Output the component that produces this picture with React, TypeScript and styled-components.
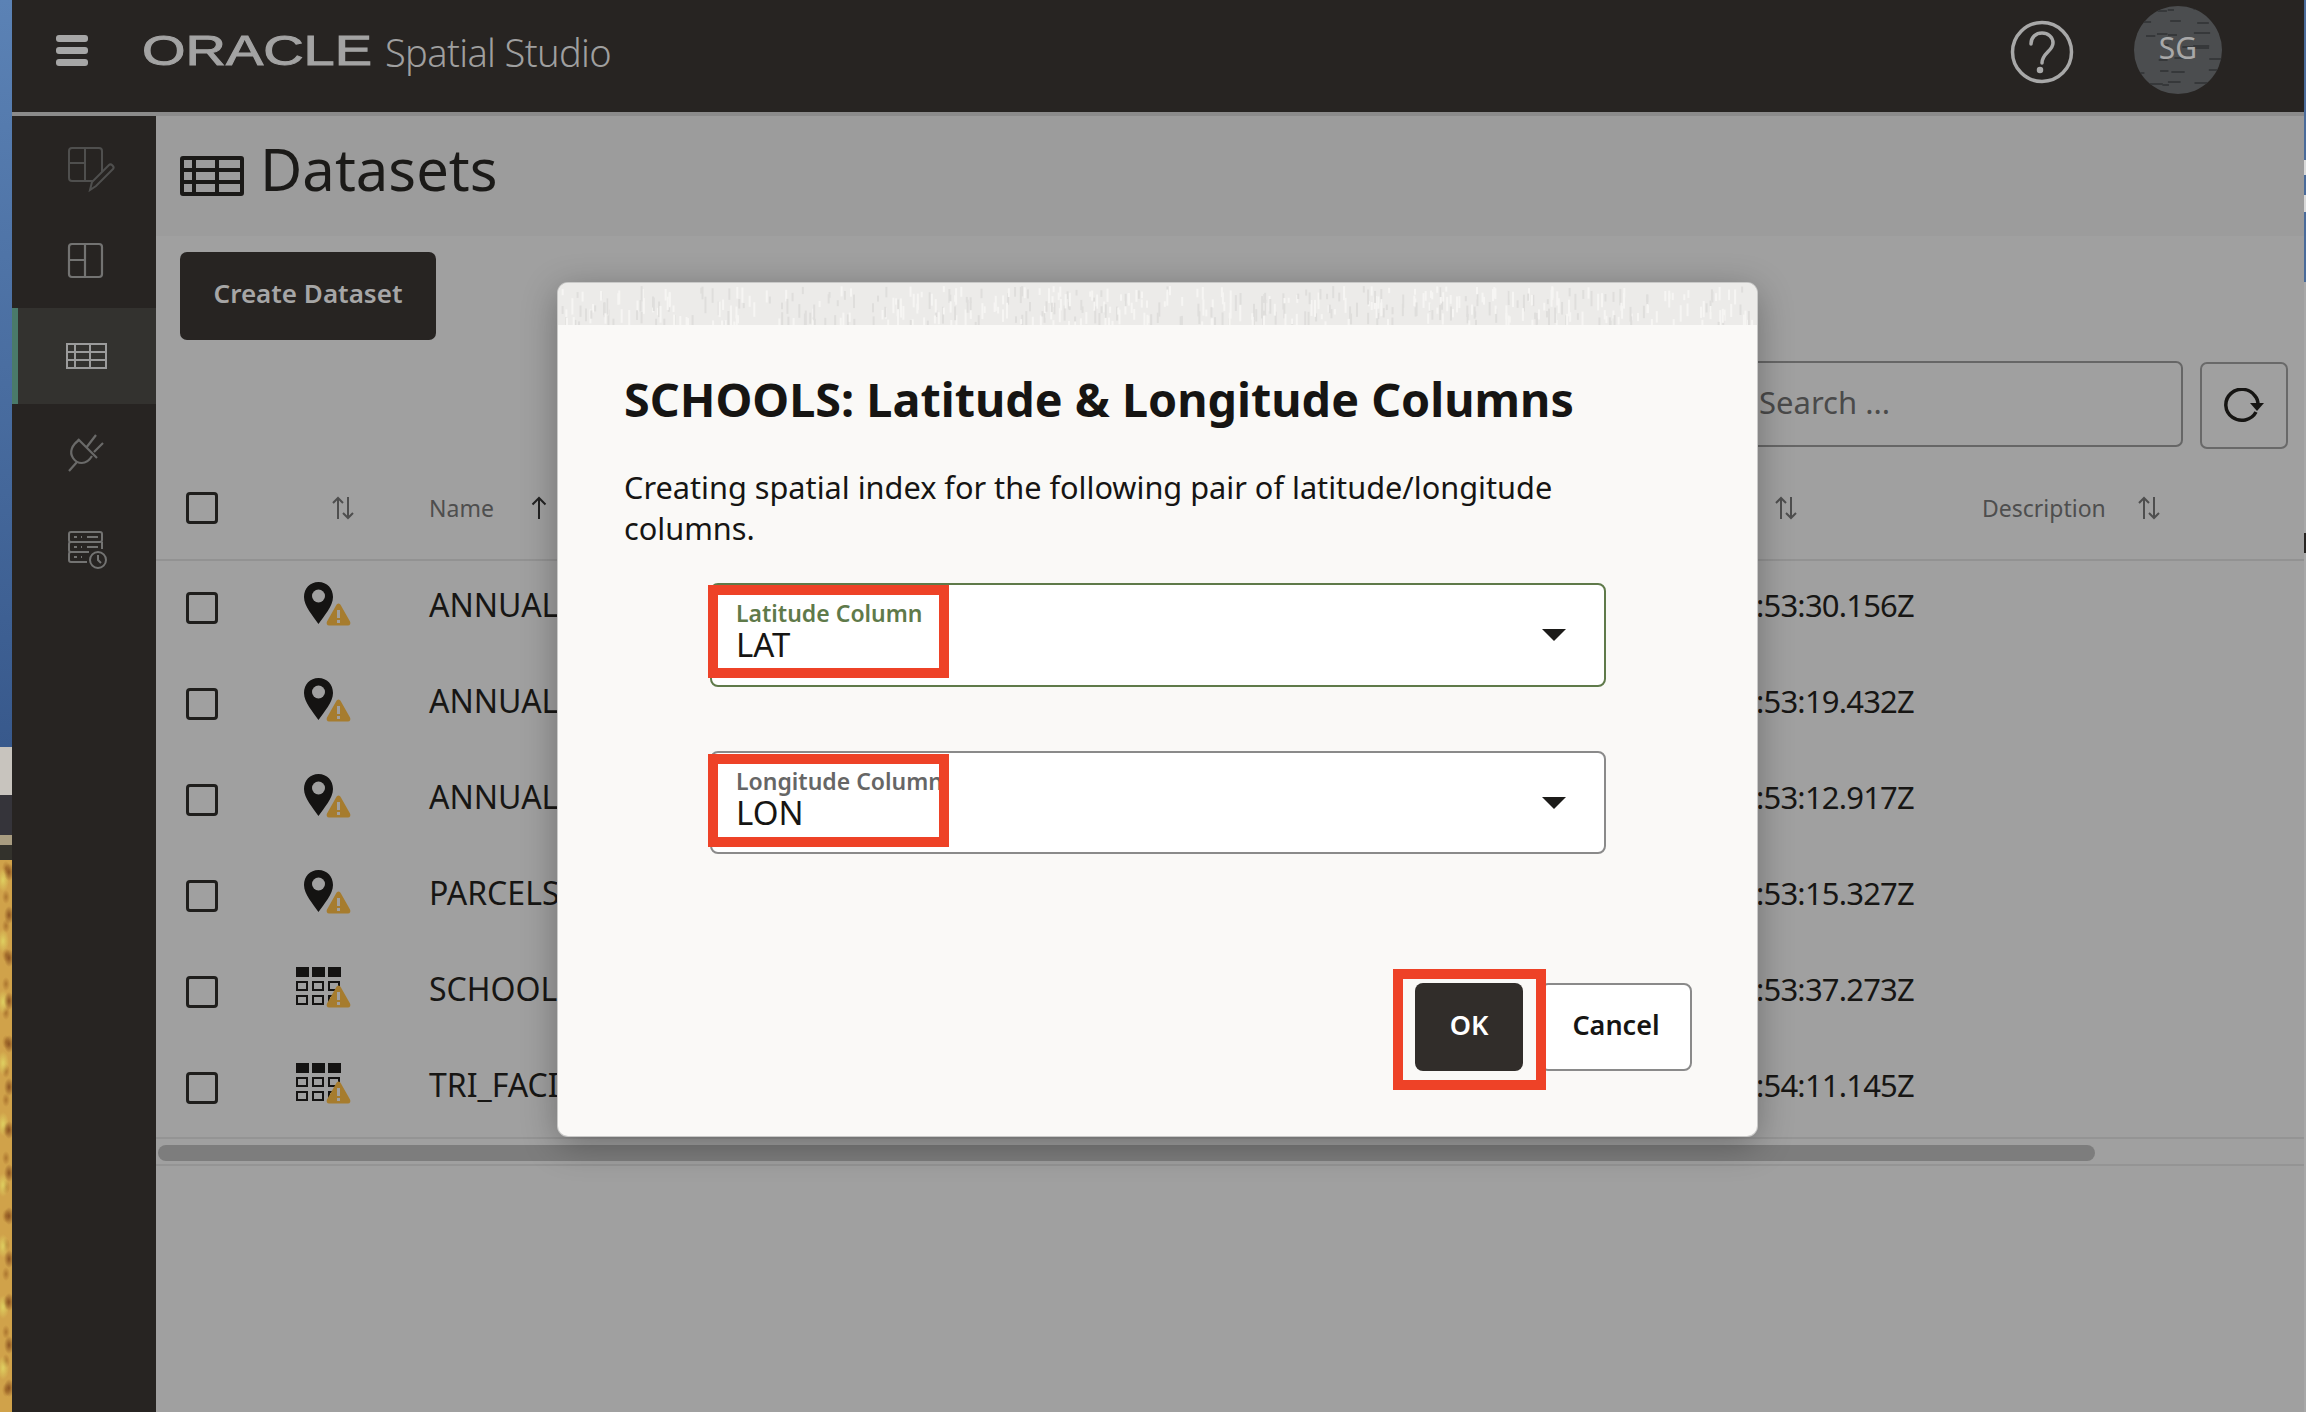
import styled, { createGlobalStyle } from "styled-components";

const FONT = `"Noto Sans", "Open Sans", "Liberation Sans", sans-serif`;

const GlobalStyle = createGlobalStyle`
  html, body {
    margin: 0;
    padding: 0;
    height: 100%;
    overflow: hidden;
    background: #272422;
  }
  * { box-sizing: border-box; }
`;

const Page = styled.div`
  position: relative;
  display: flex;
  width: 2306px;
  height: 1412px;
  overflow: hidden;
  font-family: ${FONT};
  color: #171614;
`;

const WallpaperLeft = styled.div`
  flex: 0 0 12px;
  display: flex;
  flex-direction: column;
  background: linear-gradient(
    #5b82b5 0,
    #38598c 747px,
    #c8c4be 747px,
    #c8c4be 795px,
    #35343a 795px,
    #35343a 835px,
    #a89c80 835px,
    #a89c80 845px,
    #33322c 845px,
    #33322c 860px,
    #d3a94e 860px
  );
`;

const WallpaperGold = styled.div`
  margin-top: auto;
  height: 552px;
  background:
    radial-gradient(ellipse 5px 9px at 9px 12px, rgba(120, 60, 20, 0.75), transparent) 0 0 / 12px 43px repeat-y,
    radial-gradient(ellipse 6px 12px at 3px 20px, rgba(225, 215, 100, 0.85), transparent) 0 0 / 12px 61px repeat-y,
    radial-gradient(ellipse 4px 7px at 6px 8px, rgba(150, 90, 30, 0.6), transparent) 0 0 / 12px 29px repeat-y,
    #d0a24a;
`;

const WallpaperRight = styled.div`
  flex: 0 0 2px;
  background: linear-gradient(
    #4a6b9a 0,
    #4a6b9a 160px,
    #d8d8d8 160px,
    #d8d8d8 175px,
    #4a6b9a 175px,
    #4a6b9a 195px,
    #d8d8d8 195px,
    #d8d8d8 212px,
    #4a6b9a 212px,
    #4a6b9a 282px,
    #a8a8a8 282px,
    #a8a8a8 533px,
    #272422 533px,
    #272422 553px,
    #a8a8a8 553px
  );
`;

const Shell = styled.div`
  flex: 1;
  min-width: 0;
  display: flex;
  flex-direction: column;
`;

const Header = styled.header`
  flex: 0 0 116px;
  display: flex;
  align-items: flex-start;
  background: #272422;
  border-bottom: 4px solid #8b8b8b;
`;

const MenuButton = styled.div`
  display: flex;
  flex-direction: column;
  gap: 5px;
  width: 32px;
  margin: 35px 0 0 44px;
  span {
    height: 7px;
    border-radius: 3px;
    background: #a6a6a6;
  }
`;

const Logo = styled.svg`
  width: 232px;
  height: 44px;
  margin: 28px 0 0 54px;
  overflow: visible;
  text {
    font-family: "Liberation Sans", sans-serif;
    font-size: 43px;
    fill: #a3a3a3;
    stroke: #a3a3a3;
    stroke-width: 1px;
  }
`;

const ProductName = styled.div`
  margin: 26px 0 0 11px;
  font-size: 38px;
  line-height: 52px;
  font-weight: 300;
  letter-spacing: -0.65px;
  color: #9f9f9f;
  white-space: nowrap;
`;

const HeaderRight = styled.div`
  margin-left: auto;
  display: flex;
  align-items: flex-start;
  padding-right: 82px;
`;

const HelpIcon = styled.svg`
  width: 64px;
  height: 64px;
  margin: 20px 60px 0 0;
`;

const Avatar = styled.div`
  position: relative;
  width: 88px;
  height: 88px;
  margin-top: 6px;
  border-radius: 50%;
  overflow: hidden;
  background: #4b4d4f;
  display: flex;
  align-items: center;
  justify-content: center;
  padding-bottom: 6px;
  font-size: 30px;
  color: #a8a8a8;
  svg {
    position: absolute;
    inset: 0;
  }
  span {
    position: relative;
  }
`;

const Body = styled.div`
  flex: 1;
  min-height: 0;
  display: flex;
`;

const Sidebar = styled.nav`
  flex: 0 0 144px;
  background: #272422;
  border-bottom-left-radius: 14px;
`;

const SideItem = styled.div<{ $active?: boolean }>`
  height: 96px;
  display: flex;
  align-items: center;
  justify-content: center;
  background: ${(p) => (p.$active ? "#33322f" : "transparent")};
  box-shadow: ${(p) => (p.$active ? "inset 6px 0 0 #4a7a6a" : "none")};
  svg {
    overflow: visible;
  }
`;

const Main = styled.main`
  flex: 1;
  min-width: 0;
  display: flex;
  flex-direction: column;
  background: #a0a0a0;
`;

const TitleBand = styled.div`
  flex: 0 0 120px;
  display: flex;
  align-items: flex-start;
  gap: 16px;
  padding-left: 24px;
  background: #9c9c9c;
`;

const TitleIcon = styled.svg`
  width: 64px;
  height: 40px;
  margin-top: 40px;
`;

const PageTitle = styled.h1`
  margin: 12px 0 0;
  font-size: 58px;
  line-height: 82px;
  font-weight: 400;
  color: #1b1a18;
`;

const Toolbar = styled.div`
  flex: 0 0 216px;
  display: flex;
  align-items: flex-start;
  padding: 16px 16px 0 24px;
`;

const CreateButton = styled.div`
  width: 256px;
  height: 88px;
  display: flex;
  align-items: center;
  justify-content: center;
  padding-bottom: 7px;
  border-radius: 7px;
  background: #272422;
  color: #a6a6a6;
  font-size: 26px;
  font-weight: 600;
`;

const ToolbarRight = styled.div`
  margin-left: auto;
  display: flex;
  align-items: flex-start;
  gap: 17px;
  padding-top: 109px;
`;

const SearchBox = styled.div`
  width: 440px;
  height: 86px;
  display: flex;
  align-items: center;
  padding: 0 0 5px 14px;
  border: 2px solid #666;
  border-radius: 7px;
  font-size: 31px;
  color: #4a4a4a;
`;

const RefreshButton = styled.div`
  width: 88px;
  height: 87px;
  margin-top: 1px;
  display: flex;
  align-items: center;
  justify-content: center;
  border: 2px solid #696969;
  border-radius: 7px;
`;

const TableHead = styled.div`
  height: 109px;
  display: grid;
  grid-template-columns: 130px 144px 1326px 227px 1fr;
  align-items: center;
  padding-top: 4px;
  border-bottom: 2px solid #929292;
`;

const Row = styled.div`
  height: 96px;
  display: grid;
  grid-template-columns: 130px 144px 1326px 227px 1fr;
  align-items: center;
  padding-bottom: 2px;
`;

const CheckCell = styled.div`
  padding-left: 30px;
  display: flex;
`;

const Checkbox = styled.div`
  width: 32px;
  height: 32px;
  border: 3px solid #1f1e1c;
  border-radius: 4px;
`;

const HeadCell = styled.div<{ $gap?: number; $pad?: number }>`
  display: flex;
  align-items: center;
  gap: ${(p) => p.$gap ?? 0}px;
  padding-left: ${(p) => p.$pad ?? 0}px;
  margin-left: -1px;
  font-size: 23px;
  color: #4e4e4e;
`;

const StatusCell = styled.div`
  padding: 0 0 8px 10px;
  display: flex;
`;

const CellText = styled.div`
  margin: 0 0 6px -1px;
  font-size: 32px;
  line-height: 44px;
  color: #171614;
  white-space: nowrap;
`;

const TimeText = styled(CellText)`
  margin-left: 0;
  font-size: 31px;
  letter-spacing: -0.8px;
`;

const ScrollTrack = styled.div`
  height: 29px;
  padding: 6px 209px 0 2px;
  border-top: 2px solid #949494;
  border-bottom: 2px solid #949494;
`;

const ScrollThumb = styled.div`
  height: 16px;
  border-radius: 8px;
  background: #7d7d7d;
`;

const Dialog = styled.div`
  position: absolute;
  left: 558px;
  top: 283px;
  width: 1199px;
  height: 853px;
  display: flex;
  flex-direction: column;
  overflow: hidden;
  background: #faf9f7;
  border-radius: 10px;
  box-shadow: 0 0 0 1px #c9c9c8, 0 8px 36px rgba(0, 0, 0, 0.32);
`;

const DialogBand = styled.svg`
  display: block;
  flex: 0 0 42px;
  width: 100%;
  background: #ecebe9;
`;

const DialogBody = styled.div`
  flex: 1;
  display: flex;
  flex-direction: column;
  padding: 0 65px 65px 66px;
`;

const DialogTitle = styled.h2`
  margin: 42px 0 0;
  font-size: 46.7px;
  line-height: 64px;
  font-weight: 700;
  color: #161513;
  white-space: nowrap;
`;

const DialogText = styled.p`
  margin: 36px 0 0;
  width: 960px;
  font-size: 30.7px;
  line-height: 41px;
  color: #161513;
`;

const SelectField = styled.div<{ $focused?: boolean }>`
  position: relative;
  width: 896px;
  height: ${(p) => (p.$focused ? "104px" : "103px")};
  margin: ${(p) => (p.$focused ? "34px" : "64px")} 0 0 86px;
  padding: 14px 0 0 24px;
  background: #fff;
  border: 2px solid ${(p) => (p.$focused ? "#5f7a4a" : "#8a8a8a")};
  border-radius: 8px;
`;

const FieldLabel = styled.div<{ $focused?: boolean }>`
  font-size: 23px;
  line-height: 28px;
  font-weight: 600;
  color: ${(p) => (p.$focused ? "#5f7a4a" : "#666")};
  white-space: nowrap;
`;

const FieldValue = styled.div`
  font-size: 33px;
  line-height: 36px;
  color: #161513;
`;

const Caret = styled.div`
  position: absolute;
  right: 38px;
  top: 44px;
  width: 0;
  height: 0;
  border-left: 12px solid transparent;
  border-right: 12px solid transparent;
  border-top: 12px solid #1c1b19;
`;

const Highlight = styled.div<{ $left: number; $top: number; $w: number; $h: number }>`
  position: absolute;
  left: ${(p) => p.$left}px;
  top: ${(p) => p.$top}px;
  width: ${(p) => p.$w}px;
  height: ${(p) => p.$h}px;
  border: 10px solid #ee4227;
  pointer-events: none;
`;

const DialogFooter = styled.div`
  margin-top: auto;
  display: flex;
  justify-content: flex-end;
  gap: 17px;
`;

const OkWrap = styled.div`
  position: relative;
  display: flex;
`;

const DialogButton = styled.div<{ $primary?: boolean }>`
  height: 88px;
  width: ${(p) => (p.$primary ? "108px" : "152px")};
  display: flex;
  align-items: center;
  justify-content: center;
  padding-bottom: 6px;
  border-radius: 8px;
  font-size: 27px;
  font-weight: 600;
  color: ${(p) => (p.$primary ? "#fff" : "#161513")};
  background: ${(p) => (p.$primary ? "#312d2a" : "#fff")};
  border: ${(p) => (p.$primary ? "none" : "2px solid #8a8a8a")};
`;

// deterministic noise so the texture is the same on every load
const noise = (seed: number) => {
  const v = Math.sin(seed * 127.1) * 43758.5453;
  return v - Math.floor(v);
};

const bandStrokes = Array.from({ length: 520 }, (_, i) => ({
  x: noise(i + 1) * 1199,
  y: noise(i + 501) * 36 + 3,
  h: 5 + noise(i + 901) * 12,
  light: noise(i + 1301) > 0.45,
}));

const avatarDashes = Array.from({ length: 26 }, (_, i) => ({
  x: noise(i + 11) * 80,
  y: ((i * 37) % 86) + 1,
  w: 6 + noise(i + 71) * 12,
}));

const SortIcon = () => (
  <svg width="22" height="24" viewBox="0 0 22 24" fill="none" stroke="#4e4e4e" strokeWidth="2">
    <path d="M6 23V2M1 7l5-5 5 5M16 1v21M11 17l5 5 5-5" />
  </svg>
);

const AscIcon = () => (
  <svg width="16" height="24" viewBox="0 0 16 24" fill="none" stroke="#222" strokeWidth="2">
    <path d="M8 23V2M1.500 8.500 8 2l6.500 6.500" />
  </svg>
);

const WarnBadge = ({ x, y }: { x: number; y: number }) => (
  <g transform={`translate(${x} ${y})`}>
    <path
      d="M12.500 1.500 C13.500 1.500 14.200 2.200 14.800 3.300 L24 19.500 C25 21.500 24 23.500 22 23.500 H3 C1 23.500 0 21.500 1 19.500 L10.200 3.300 C10.800 2.200 11.500 1.500 12.500 1.500Z"
      fill="#a67c2e"
    />
    <rect x="11" y="8" width="3" height="8" fill="#a0a0a0" />
    <rect x="11" y="18" width="3" height="3" fill="#a0a0a0" />
  </g>
);

const PinStatus = () => (
  <svg width="60" height="48" viewBox="0 0 60 48">
    <path
      d="M22.500 2 C14 2 8 8.500 8 17 C8 26 17 36 22.500 44 C28 36 37 26 37 17 C37 8.500 31 2 22.500 2Z"
      fill="#141312"
    />
    <circle cx="22.500" cy="16" r="6.500" fill="#a0a0a0" />
    <WarnBadge x={30} y={22} />
  </svg>
);

const GridStatus = () => (
  <svg width="60" height="48" viewBox="0 0 60 48">
    {[0, 16, 32].map((x) => (
      <rect key={x} x={x} y={3} width="13" height="10" fill="#141312" />
    ))}
    {[17, 31].map((y) =>
      [0, 16, 32].map((x) => (
        <rect
          key={`${x}-${y}`}
          x={x + 1}
          y={y + 1}
          width="10"
          height="8"
          fill="none"
          stroke="#141312"
          strokeWidth="2"
        />
      )),
    )}
    <WarnBadge x={30} y={20} />
  </svg>
);

const rows = [
  { name: "ANNUAL", time: ":53:30.156Z", kind: "pin" },
  { name: "ANNUAL", time: ":53:19.432Z", kind: "pin" },
  { name: "ANNUAL", time: ":53:12.917Z", kind: "pin" },
  { name: "PARCELS", time: ":53:15.327Z", kind: "pin" },
  { name: "SCHOOLS", time: ":53:37.273Z", kind: "grid" },
  { name: "TRI_FACILITIES", time: ":54:11.145Z", kind: "grid" },
];

const App = () => {
  return (
    <Page>
      <GlobalStyle />
      <WallpaperLeft>
        <WallpaperGold />
      </WallpaperLeft>
      <Shell>
        <Header>
          <MenuButton>
            <span />
            <span />
            <span />
          </MenuButton>
          <Logo viewBox="0 0 232 44">
            <text x="0" y="37" textLength="230" lengthAdjust="spacingAndGlyphs">
              ORACLE
            </text>
          </Logo>
          <ProductName>Spatial Studio</ProductName>
          <HeaderRight>
            <HelpIcon viewBox="0 0 64 64" fill="none" stroke="#a8a8a8" strokeWidth="3.500">
              <circle cx="32" cy="32" r="29.500" />
              <path d="M21 24c0-7 5-11 11-11s11 4 11 10c0 8-11 10-11 20" strokeLinecap="round" />
              <circle cx="30" cy="50" r="1.500" fill="#a8a8a8" />
            </HelpIcon>
            <Avatar>
              <svg width="88" height="88" viewBox="0 0 88 88">
                {avatarDashes.map((d, i) => (
                  <rect key={i} x={d.x} y={d.y} width={d.w} height="2" fill="#36383a" />
                ))}
              </svg>
              <span>SG</span>
            </Avatar>
          </HeaderRight>
        </Header>
        <Body>
          <Sidebar>
            <SideItem>
              <svg width="48" height="48" viewBox="0 0 48 48" fill="none" stroke="#4f4f4e" strokeWidth="2">
                <rect x="9" y="8" width="33" height="33" rx="3" />
                <path d="M25 8v33M9 23h16" />
                <path d="M30 50l2-8 17-17c2-2 6 2 4 4L36 46z" fill="#272422" />
              </svg>
            </SideItem>
            <SideItem>
              <svg width="48" height="48" viewBox="0 0 48 48" fill="none" stroke="#737372" strokeWidth="2.200">
                <rect x="9" y="8" width="33" height="33" rx="3" />
                <path d="M25 8v33M9 24h16" />
              </svg>
            </SideItem>
            <SideItem $active>
              <svg width="48" height="48" viewBox="0 0 48 48" fill="none" stroke="#9b9b9b" strokeWidth="2">
                <rect x="7" y="12" width="39" height="24" />
                <path d="M7 20h39M7 28h39M15 12v24M30 12v24" />
              </svg>
            </SideItem>
            <SideItem>
              <svg width="48" height="48" viewBox="0 0 48 48" fill="none" stroke="#6a6a69" strokeWidth="2.200">
                <path d="M18 11l19 19M26 20l10-13M34 24l9-9M9 43l8-9" />
                <path d="M19 12c-7 5-10 12-6 18s13 8 19-2" />
              </svg>
            </SideItem>
            <SideItem>
              <svg width="48" height="48" viewBox="0 0 48 48" fill="none" stroke="#737372" strokeWidth="2">
                <path d="M26 18H11a2 2 0 0 1-2-2v-6a2 2 0 0 1 2-2h29a2 2 0 0 1 2 2v6a2 2 0 0 1-2 2H26z" />
                <path d="M11 18a2 2 0 0 0-2 2v6a2 2 0 0 0 2 2h18M42 18v7" />
                <path d="M11 28a2 2 0 0 0-2 2v6a2 2 0 0 0 2 2h16" />
                <path d="M14 13h3M21 13h1M27 13h11M14 23h3M21 23h1M27 23h11M14 33h3M21 33h1" />
                <circle cx="38" cy="36" r="8" />
                <path d="M38 31v5l3 3" />
              </svg>
            </SideItem>
          </Sidebar>
          <Main>
            <TitleBand>
              <TitleIcon viewBox="0 0 64 40" fill="none" stroke="#1a1917" strokeWidth="4">
                <rect x="2" y="2" width="60" height="36" rx="1" />
                <path d="M2 14h60M2 26h60M14 2v36M37 2v36" />
              </TitleIcon>
              <PageTitle>Datasets</PageTitle>
            </TitleBand>
            <Toolbar>
              <CreateButton>Create Dataset</CreateButton>
              <ToolbarRight>
                <SearchBox>Search ...</SearchBox>
                <RefreshButton>
                  <svg width="40" height="36" viewBox="0 0 40 36" fill="none" stroke="#161513" strokeWidth="3.500">
                    <path d="M32 24A16 15.500 0 1 1 31 8c2 2 3 5 3 9" />
                    <path d="M26 15h14l-7 8z" fill="#161513" stroke="none" />
                  </svg>
                </RefreshButton>
              </ToolbarRight>
            </Toolbar>
            <TableHead>
              <CheckCell>
                <Checkbox />
              </CheckCell>
              <HeadCell $pad={47}>
                <SortIcon />
              </HeadCell>
              <HeadCell $gap={37}>
                Name
                <AscIcon />
              </HeadCell>
              <HeadCell $pad={20}>
                <SortIcon />
              </HeadCell>
              <HeadCell $gap={32}>
                Description
                <SortIcon />
              </HeadCell>
            </TableHead>
            {rows.map((row, i) => (
              <Row key={i}>
                <CheckCell>
                  <Checkbox />
                </CheckCell>
                <StatusCell>{row.kind === "pin" ? <PinStatus /> : <GridStatus />}</StatusCell>
                <CellText>{row.name}</CellText>
                <TimeText>{row.time}</TimeText>
                <div />
              </Row>
            ))}
            <ScrollTrack>
              <ScrollThumb />
            </ScrollTrack>
          </Main>
        </Body>
      </Shell>
      <WallpaperRight />
      <Dialog>
        <DialogBand viewBox="0 0 1199 42" preserveAspectRatio="none">
          {bandStrokes.map((s, i) => (
            <rect
              key={i}
              x={s.x}
              y={s.y}
              width="2"
              height={s.h}
              fill={s.light ? "#f6f5f3" : "#dfdedc"}
            />
          ))}
        </DialogBand>
        <DialogBody>
          <DialogTitle>SCHOOLS: Latitude &amp; Longitude Columns</DialogTitle>
          <DialogText>Creating spatial index for the following pair of latitude/longitude columns.</DialogText>
          <SelectField $focused>
            <FieldLabel $focused>Latitude Column</FieldLabel>
            <FieldValue>LAT</FieldValue>
            <Caret />
            <Highlight $left={-4} $top={0} $w={241} $h={93} />
          </SelectField>
          <SelectField>
            <FieldLabel>Longitude Column</FieldLabel>
            <FieldValue>LON</FieldValue>
            <Caret />
            <Highlight $left={-4} $top={1} $w={241} $h={93} />
          </SelectField>
          <DialogFooter>
            <OkWrap>
              <DialogButton $primary>OK</DialogButton>
              <Highlight $left={-22} $top={-14} $w={153} $h={121} />
            </OkWrap>
            <DialogButton>Cancel</DialogButton>
          </DialogFooter>
        </DialogBody>
      </Dialog>
    </Page>
  );
};

export default App;
